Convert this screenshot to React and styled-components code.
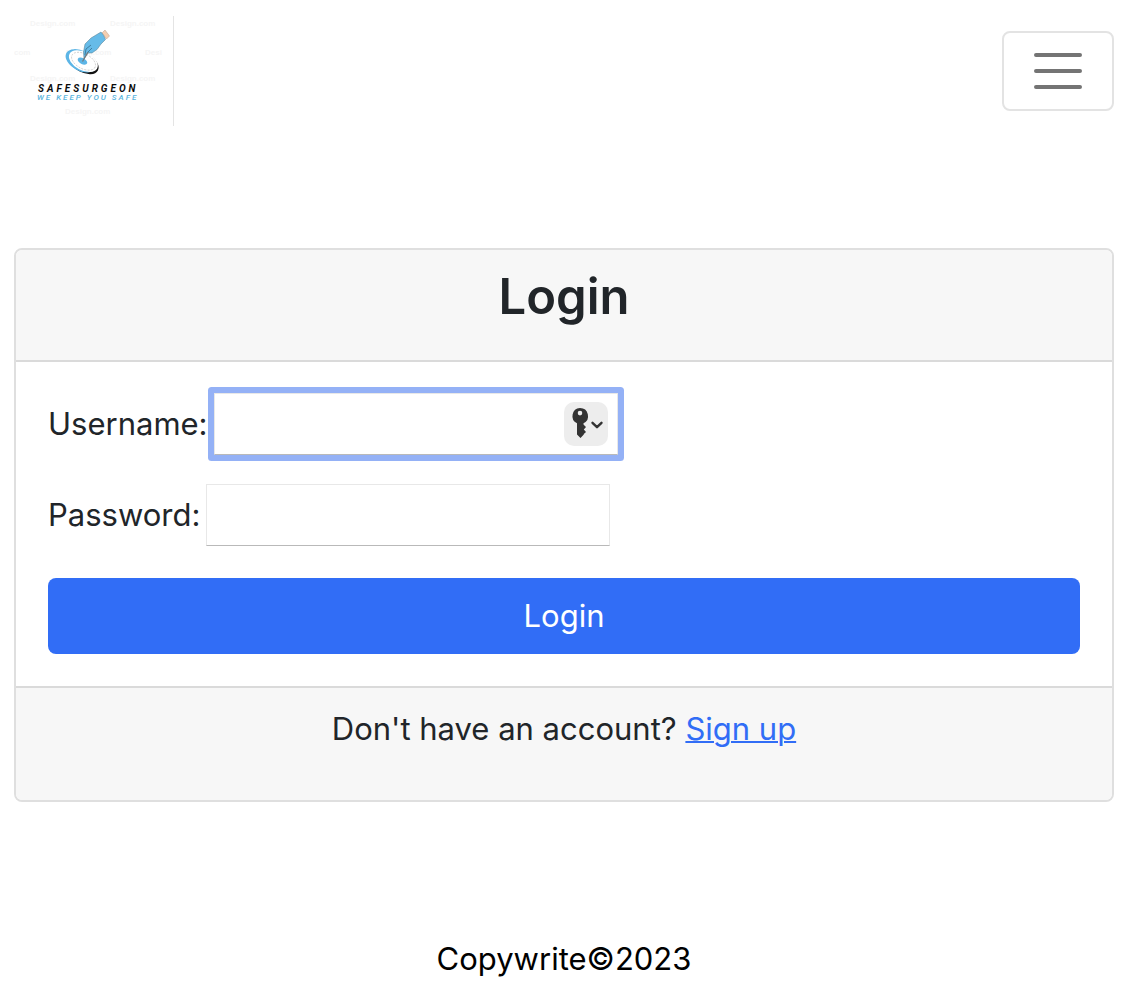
import React from "react";
import styled, { createGlobalStyle, css } from "styled-components";

const GlobalStyle = createGlobalStyle`
  *, *::before, *::after { box-sizing: border-box; }
  body {
    margin: 0;
    background: #fff;
    color: #212529;
    font-family: Inter, "Liberation Sans", sans-serif;
    font-size: 31px;
    line-height: 48px;
  }
`;

const Navbar = styled.nav`
  display: flex;
  align-items: center;
  justify-content: space-between;
  padding: 16px 14px;
`;

const Brand = styled.a`
  display: block;
  border-right: 1px solid #e4e4e4;
`;

const LogoArt = styled.svg`
  display: block;
  width: 159px;
  height: 110px;
`;

const LogoName = styled.text`
  font: italic 700 10px Roboto, sans-serif;
  letter-spacing: 3px;
  fill: #0b0b0b;
`;

const LogoTagline = styled.text`
  font: italic 500 8px Roboto, sans-serif;
  letter-spacing: 2px;
  fill: #5ab4de;
`;

const Watermark = styled.text`
  font: 700 8px "Liberation Sans", sans-serif;
  fill: #f5f5f5;
`;

const Toggler = styled.button`
  display: flex;
  align-items: center;
  justify-content: center;
  width: 112px;
  height: 80px;
  padding: 0;
  background: transparent;
  border: 2px solid #e3e3e3;
  border-radius: 8px;
`;

const TogglerIcon = styled.svg`
  width: 60px;
  height: 60px;
  fill: none;
  stroke: #747474;
  stroke-width: 4;
  stroke-linecap: round;
`;

const Main = styled.main`
  padding: 106px 14px 0;
`;

const Card = styled.section`
  background: #fff;
  border: 2px solid #dfdfdf;
  border-radius: 8px;
  overflow: hidden;
`;

const CardHeader = styled.header`
  padding: 16px 32px 32px;
  background: #f7f7f7;
  border-bottom: 2px solid #dadada;
  text-align: center;
`;

const Title = styled.h1`
  margin: 0;
  font-size: 49px;
  font-weight: 600;
  line-height: 62px;
`;

const CardBody = styled.form`
  padding: 31px 32px 32px;
`;

const Field = styled.div`
  display: flex;
  align-items: center;
  gap: 6px;
  margin-bottom: ${(p) => (p.$last ? "32px" : "29px")};
`;

const InputWrap = styled.div`
  position: relative;
  width: 404px;
`;

const TextInput = styled.input`
  display: block;
  width: 100%;
  height: 62px;
  padding: 2px 6px;
  border: 1px solid #e8e8e8;
  border-bottom-color: #b9b9b9;
  border-radius: 0;
  background: #fff;
  color: inherit;
  font: inherit;
  outline: none;
  ${(p) =>
    p.$active &&
    css`
      padding-right: 60px;
      border-radius: 1px;
      box-shadow: 0 0 0 6px #94b1f6;
    `}
`;

const KeyButton = styled.button`
  position: absolute;
  top: 9px;
  right: 10px;
  width: 44px;
  height: 44px;
  padding: 0;
  border: 0;
  border-radius: 10px;
  background: #ededed;
  svg { display: block; }
`;

const Submit = styled.button`
  display: block;
  width: 100%;
  padding: 14px 24px;
  border: 0;
  border-radius: 8px;
  background: #316df6;
  color: #fff;
  font: inherit;
`;

const CardFooter = styled.footer`
  padding: 17px 32px 47px;
  background: #f7f7f7;
  border-top: 2px solid #dadada;
  text-align: center;
`;

const Link = styled.a`
  color: #316df6;
  text-decoration: underline;
  text-decoration-thickness: 2px;
`;

const PageFooter = styled.footer`
  padding: 133px 14px 21px;
  color: #000;
  text-align: center;
`;

function Logo() {
  return (
    <LogoArt viewBox="0 0 159 110" role="img" aria-label="SafeSurgeon">
      <Watermark x="16" y="10">Design.com</Watermark>
      <Watermark x="96" y="10">Design.com</Watermark>
      <Watermark x="0" y="39">com</Watermark>
      <Watermark x="52" y="39">Design.com</Watermark>
      <Watermark x="131" y="39">Desi</Watermark>
      <Watermark x="16" y="65">Design.com</Watermark>
      <Watermark x="96" y="65">Design.com</Watermark>
      <Watermark x="51" y="98">Design.com</Watermark>
      <g transform="rotate(28 68 46)">
        <ellipse cx="70" cy="46" rx="16" ry="9.5" fill="#111" />
        <ellipse cx="66.5" cy="45.5" rx="16.5" ry="10" fill="#5cb5e6" />
        <ellipse cx="68.8" cy="44.6" rx="15.6" ry="9.2" fill="#fff" />
        <ellipse cx="69" cy="44.6" rx="13" ry="7.4" fill="none" stroke="#aaa" strokeWidth="0.5" strokeDasharray="2 1.2" />
        <ellipse cx="68" cy="45" rx="5.2" ry="3" fill="#5cb5e6" />
      </g>
      <path d="M88 17 L91 14 L95.5 20 L92.5 23 Z" fill="#f4ceb0" stroke="#a88c78" strokeWidth="0.4" />
      <path d="M87 16 Q90 19 91.5 23.5 L87 28 L83 33.5 L78 37 L74 37 L70 43 L69.5 36 L71 28 L77 22 Z" fill="#66bbe8" stroke="#50788b" strokeWidth="0.5" />
      <path d="M77 29 L72 33 L71 39 M78 32 L74 36" fill="none" stroke="#356f8d" strokeWidth="0.8" />
      <path d="M74 36 L68.5 45.5" stroke="#777" strokeWidth="1.2" />
      <LogoName x="24" y="76">SAFESURGEON</LogoName>
      <LogoTagline x="23" y="84">WE KEEP YOU SAFE</LogoTagline>
    </LogoArt>
  );
}

function KeyIcon() {
  return (
    <svg width="44" height="44" viewBox="0 0 44 44" aria-hidden="true">
      <path
        fillRule="evenodd"
        fill="#333"
        d="M16 6 a8 8 0 0 1 3.5 15.2 V22.5 L22 25 L19.8 27.5 L22 30 L19.8 32 V32.5 L16.5 36 L13 32.5 V21.2 A8 8 0 0 1 16 6 Z M16 8.8 a2.3 2.3 0 1 0 0 4.6 a2.3 2.3 0 0 0 0 -4.6 Z"
      />
      <path d="M28.5 20.8 L33 25.2 L37.5 20.8" fill="none" stroke="#333" strokeWidth="2.4" strokeLinecap="round" strokeLinejoin="round" />
    </svg>
  );
}

export default function App() {
  return (
    <>
      <GlobalStyle />
      <Navbar>
        <Brand href="#">
          <Logo />
        </Brand>
        <Toggler type="button" aria-label="Toggle navigation">
          <TogglerIcon viewBox="0 0 60 60">
            <path d="M8 14 H52 M8 30 H52 M8 46 H52" />
          </TogglerIcon>
        </Toggler>
      </Navbar>
      <Main>
        <Card>
          <CardHeader>
            <Title>Login</Title>
          </CardHeader>
          <CardBody onSubmit={(e) => e.preventDefault()}>
            <Field>
              <label htmlFor="username">Username:</label>
              <InputWrap>
                <TextInput id="username" type="text" autoComplete="username" $active />
                <KeyButton type="button" aria-label="Saved passwords">
                  <KeyIcon />
                </KeyButton>
              </InputWrap>
            </Field>
            <Field $last>
              <label htmlFor="password">Password:</label>
              <InputWrap>
                <TextInput id="password" type="password" autoComplete="current-password" />
              </InputWrap>
            </Field>
            <Submit type="submit">Login</Submit>
          </CardBody>
          <CardFooter>
            Don't have an account? <Link href="#">Sign up</Link>
          </CardFooter>
        </Card>
      </Main>
      <PageFooter>Copywrite©2023</PageFooter>
    </>
  );
}
